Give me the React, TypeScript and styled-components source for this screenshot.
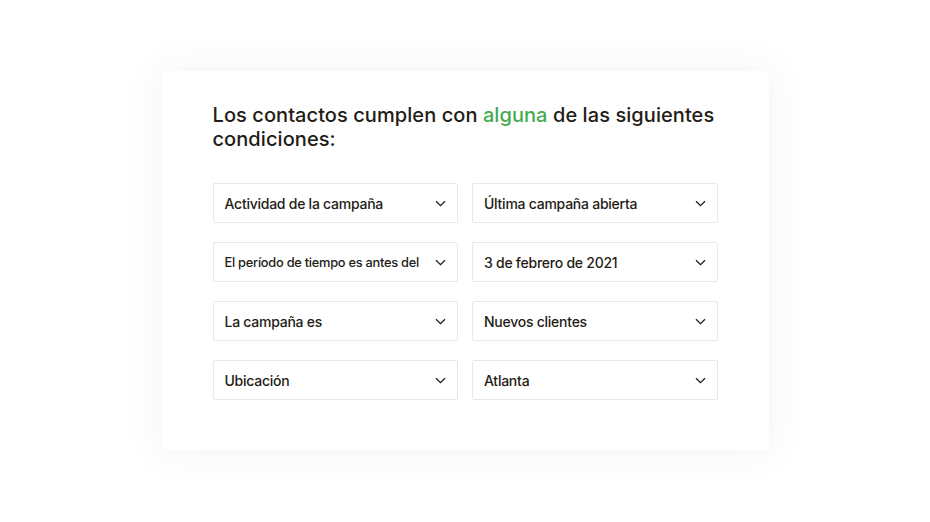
import styled, { createGlobalStyle } from "styled-components";

const GlobalStyle = createGlobalStyle`
  html, body {
    margin: 0;
    padding: 0;
    background: #ffffff;
  }
  body {
    font-family: Inter, "Open Sans", sans-serif;
    color: #241c15;
  }
`;

const Page = styled.div`
  width: 930px;
  height: 521px;
  display: flex;
  align-items: center;
  justify-content: center;
`;

const Card = styled.div`
  width: 607px;
  box-sizing: border-box;
  padding: 32px 51px 50px;
  background: #ffffff;
  border-radius: 5px;
  box-shadow: 0 0 40px 6px rgba(0, 0, 0, 0.045);
`;

const Title = styled.h2`
  margin: 0 0 32px;
  font-size: 20px;
  line-height: 24px;
  font-weight: 500;
  letter-spacing: 0.07px;
  color: #241c15;
`;

const Accent = styled.span`
  color: #45ab50;
`;

const Grid = styled.div`
  display: grid;
  grid-template-columns: 1fr 1fr;
  column-gap: 14px;
  row-gap: 19px;
`;

const Select = styled.div`
  height: 40px;
  box-sizing: border-box;
  border: 1px solid #ebe8e4;
  border-radius: 2px;
  display: flex;
  align-items: center;
  justify-content: space-between;
  padding: 0 11px 0 11px;
  background: #ffffff;
`;

const Label = styled.span<{ $size?: number }>`
  font-size: ${(p) => p.$size ?? 14}px;
  font-weight: 500;
  letter-spacing: -0.25px;
  color: #241c15;
  white-space: nowrap;
`;

const Chevron = () => (
  <svg width="11" height="7" viewBox="0 0 11 7" fill="none">
    <path d="M1 1.2 5.5 5.6 10 1.2" stroke="#241c15" strokeWidth="1.3" />
  </svg>
);

const fields: { label: string; size?: number }[] = [
  { label: "Actividad de la campaña" },
  { label: "Última campaña abierta" },
  { label: "El período de tiempo es antes del", size: 12.8 },
  { label: "3 de febrero de 2021" },
  { label: "La campaña es" },
  { label: "Nuevos clientes" },
  { label: "Ubicación" },
  { label: "Atlanta" },
];

export default function App() {
  return (
    <>
      <GlobalStyle />
      <Page>
        <Card>
          <Title>
            Los contactos cumplen con <Accent>alguna</Accent> de las siguientes
            condiciones:
          </Title>
          <Grid>
            {fields.map((f) => (
              <Select key={f.label}>
                <Label $size={f.size}>{f.label}</Label>
                <Chevron />
              </Select>
            ))}
          </Grid>
        </Card>
      </Page>
    </>
  );
}
